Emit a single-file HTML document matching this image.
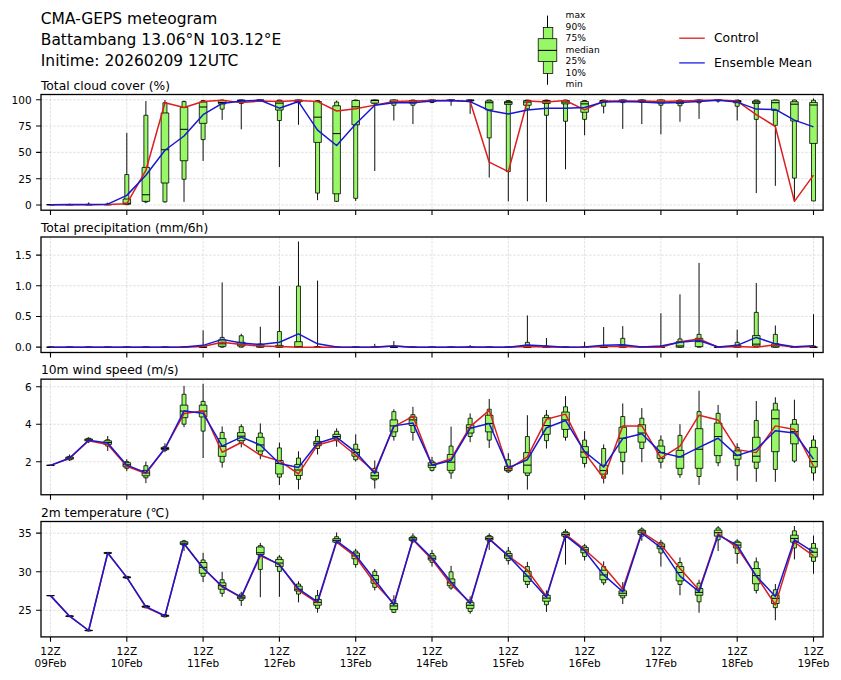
<!DOCTYPE html>
<html lang="en"><head><meta charset="utf-8"><title>CMA-GEPS meteogram</title>
<style>html,body{margin:0;padding:0;background:#fff}svg{display:block}text{font-family:"DejaVu Sans","Liberation Sans",sans-serif;fill:#000}</style></head><body>
<svg width="841" height="680" viewBox="0 0 841 680">
<rect width="841" height="680" fill="#fff"/>
<text x="40.8" y="23.7" font-size="15.46">CMA-GEPS meteogram</text>
<text x="40.8" y="44.9" font-size="15.46">Battambang 13.06°N 103.12°E</text>
<text x="40.8" y="65.5" font-size="15.46">Initime: 20260209 12UTC</text>
<line x1="547.5" y1="15.6" x2="547.5" y2="84.8" stroke="#000" stroke-width="1"/>
<rect x="543.3" y="27.5" width="9.5" height="45.9" fill="#98f766" stroke="#000" stroke-width="0.75"/>
<rect x="538.2" y="38.7" width="18.6" height="22.9" fill="#98f766" stroke="#000" stroke-width="0.75"/>
<line x1="538.2" y1="50.4" x2="556.8" y2="50.4" stroke="#000" stroke-width="1.1"/>
<text x="565.6" y="18.1" font-size="9.1">max</text>
<text x="565.6" y="30.0" font-size="9.1">90%</text>
<text x="565.6" y="41.2" font-size="9.1">75%</text>
<text x="565.6" y="52.9" font-size="9.1">median</text>
<text x="565.6" y="64.1" font-size="9.1">25%</text>
<text x="565.6" y="75.9" font-size="9.1">10%</text>
<text x="565.6" y="87.3" font-size="9.1">min</text>
<line x1="679.2" y1="38.2" x2="704.8" y2="38.2" stroke="#d81e1e" stroke-width="1.3"/>
<line x1="679.2" y1="62.9" x2="704.8" y2="62.9" stroke="#1c1ce0" stroke-width="1.3"/>
<text x="714.0" y="42.1" font-size="12.35">Control</text>
<text x="714.0" y="66.8" font-size="12.35">Ensemble Mean</text>
<g id="panel1">
<text x="40.9" y="89.7" font-size="12.3">Total cloud cover (%)</text>
<clipPath id="c0"><rect x="41.0" y="94.5" width="782.1" height="115.7"/></clipPath>
<path d="M50.50 94.5V210.2M126.80 94.5V210.2M203.10 94.5V210.2M279.40 94.5V210.2M355.70 94.5V210.2M432.00 94.5V210.2M508.30 94.5V210.2M584.60 94.5V210.2M660.90 94.5V210.2M737.20 94.5V210.2M813.50 94.5V210.2M41.0 205.00H823.1M41.0 178.69H823.1M41.0 152.37H823.1M41.0 126.06H823.1M41.0 99.74H823.1" stroke="#b0b0b0" stroke-opacity="0.55" stroke-width="0.65" stroke-dasharray="2.8 1.2" fill="none"/>
<g clip-path="url(#c0)">
<path d="M50.50 204.70V204.70M69.58 204.70V203.65M88.65 204.70V202.40M107.72 204.70V202.61M126.80 204.70V132.88M145.88 203.23V101.05M164.95 202.61V100.00M184.03 201.87V100.52M203.10 160.94V100.00M222.17 119.89V100.00M241.25 129.32V100.00M260.32 101.57V100.00M279.40 167.01V100.00M298.48 124.81V100.00M317.55 200.20V100.00M336.62 201.87V100.52M355.70 200.93V100.00M374.77 170.99V100.00M393.85 120.52V100.00M412.93 124.08V100.00M432.00 103.14V100.00M451.07 105.76V100.00M470.15 113.93V100.00M489.22 177.58V100.00M508.30 201.35V100.00M527.38 201.35V100.00M546.45 201.87V100.00M565.52 169.31V100.00M584.60 135.28V100.00M603.67 113.40V100.00M622.75 128.90V100.00M641.82 124.08V100.00M660.90 134.34V100.00M679.98 121.78V100.00M699.05 118.85V100.00M718.12 102.72V100.00M737.20 120.52V100.00M756.27 193.08V100.00M775.35 185.85V100.00M794.42 201.35V99.69M813.50 201.35V98.43" stroke="#000" stroke-width="0.95" fill="none"/>
<path d="M48.50 204.70H52.50V204.70H48.50ZM67.58 204.49H71.58V204.70H67.58ZM86.65 204.18H90.65V204.70H86.65ZM105.72 203.86H109.72V204.70H105.72ZM124.80 174.55H128.80V204.70H124.80ZM143.88 115.29H147.88V201.87H143.88ZM162.95 102.72H166.95V201.87H162.95ZM182.03 101.57H186.03V179.26H182.03ZM201.10 100.52H205.10V139.58H201.10ZM220.17 100.00H224.17V109.11H220.17ZM239.25 100.00H243.25V103.46H239.25ZM258.32 100.00H262.32V101.05H258.32ZM277.40 100.00H281.40V120.52H277.40ZM296.48 100.00H300.48V102.72H296.48ZM315.55 100.52H319.55V193.08H315.55ZM334.62 102.09H338.62V201.35H334.62ZM353.70 100.00H357.70V198.31H353.70ZM372.77 100.00H376.77V103.87H372.77ZM391.85 100.00H395.85V105.23H391.85ZM410.93 100.00H414.93V105.23H410.93ZM430.00 100.00H434.00V102.51H430.00ZM449.07 100.00H453.07V101.05H449.07ZM468.15 100.00H472.15V101.57H468.15ZM487.22 100.00H491.22V137.90H487.22ZM506.30 100.52H510.30V171.61H506.30ZM525.38 100.00H529.38V108.79H525.38ZM544.45 100.00H548.45V115.29H544.45ZM563.52 100.00H567.52V121.25H563.52ZM582.60 100.52H586.60V119.37H582.60ZM601.67 100.00H605.67V106.18H601.67ZM620.75 100.00H624.75V102.62H620.75ZM639.82 100.00H643.82V102.51H639.82ZM658.90 100.00H662.90V105.23H658.90ZM677.98 100.00H681.98V105.76H677.98ZM697.05 100.00H701.05V102.72H697.05ZM716.12 100.00H720.12V101.05H716.12ZM735.20 100.00H739.20V106.28H735.20ZM754.27 100.00H758.27V119.37H754.27ZM773.35 100.00H777.35V125.34H773.35ZM792.42 100.00H796.42V178.11H792.42ZM811.50 100.31H815.50V200.93H811.50Z" stroke="#000" stroke-width="0.8" fill="#98f766"/>
<path d="M46.70 204.70H54.30V204.70H46.70ZM65.78 204.70H73.38V204.70H65.78ZM84.85 204.60H92.45V204.70H84.85ZM103.92 204.49H111.52V204.70H103.92ZM123.00 199.05H130.60V204.18H123.00ZM142.07 167.43H149.68V201.35H142.07ZM161.15 112.98H168.75V183.03H161.15ZM180.22 107.43H187.83V160.73H180.22ZM199.30 102.09H206.90V123.35H199.30ZM218.37 100.52H225.97V103.87H218.37ZM237.45 100.00H245.05V102.09H237.45ZM256.52 100.00H264.12V100.52H256.52ZM275.60 101.05H283.20V110.05H275.60ZM294.68 100.00H302.28V101.57H294.68ZM313.75 101.57H321.35V142.40H313.75ZM332.82 105.76H340.43V193.81H332.82ZM351.90 100.52H359.50V124.81H351.90ZM370.97 100.00H378.57V103.14H370.97ZM390.05 100.00H397.65V102.72H390.05ZM409.12 100.52H416.73V103.14H409.12ZM428.20 100.00H435.80V101.57H428.20ZM447.27 100.00H454.88V100.52H447.27ZM466.35 100.00H473.95V100.73H466.35ZM485.42 101.05H493.02V109.84H485.42ZM504.50 101.57H512.10V104.40H504.50ZM523.58 100.52H531.17V105.23H523.58ZM542.65 100.52H550.25V103.46H542.65ZM561.73 100.52H569.32V103.87H561.73ZM580.80 101.57H588.40V112.25H580.80ZM599.88 100.52H607.47V102.09H599.88ZM618.95 100.00H626.55V101.57H618.95ZM638.02 100.00H645.62V101.57H638.02ZM657.10 100.00H664.70V102.93H657.10ZM676.18 100.52H683.77V103.46H676.18ZM695.25 100.00H702.85V101.57H695.25ZM714.33 100.00H721.92V100.52H714.33ZM733.40 100.52H741.00V102.72H733.40ZM752.48 101.05H760.07V103.46H752.48ZM771.55 100.21H779.15V110.37H771.55ZM790.62 101.78H798.22V120.94H790.62ZM809.70 102.41H817.30V143.45H809.70Z" stroke="#000" stroke-width="0.8" fill="#98f766"/>
<path d="M46.70 204.70H54.30M65.78 204.70H73.38M84.85 204.70H92.45M103.92 204.70H111.52M123.00 203.23H130.60M142.07 194.75H149.68M161.15 149.73H168.75M180.22 129.32H187.83M199.30 107.01H206.90M218.37 102.51H225.97M237.45 100.52H245.05M256.52 100.21H264.12M275.60 103.14H283.20M294.68 100.52H302.28M313.75 117.17H321.35M332.82 133.61H340.43M351.90 106.81H359.50M370.97 100.52H378.57M390.05 101.57H397.65M409.12 102.09H416.73M428.20 100.52H435.80M447.27 100.21H454.88M466.35 100.31H473.95M485.42 102.72H493.02M504.50 102.72H512.10M523.58 102.09H531.17M542.65 101.57H550.25M561.73 102.09H569.32M580.80 103.87H588.40M599.88 101.05H607.47M618.95 100.73H626.55M638.02 100.52H645.62M657.10 101.57H664.70M676.18 101.57H683.77M695.25 100.52H702.85M714.33 100.21H721.92M733.40 101.57H741.00M752.48 102.09H760.07M771.55 102.72H779.15M790.62 104.19H798.22M809.70 105.03H817.30" stroke="#000" stroke-width="1.0" fill="none"/>
<polyline points="50.50,204.70 69.58,204.70 88.65,204.70 107.72,204.49 126.80,203.65 145.88,170.46 164.95,102.72 184.03,107.43 203.10,101.57 222.17,100.31 241.25,102.62 260.32,101.05 279.40,101.57 298.48,100.52 317.55,101.57 336.62,110.99 355.70,108.69 374.77,105.13 393.85,101.57 412.93,101.05 432.00,100.52 451.07,100.52 470.15,101.57 489.22,162.19 508.30,171.61 527.38,101.05 546.45,102.09 565.52,100.52 584.60,109.84 603.67,101.05 622.75,101.05 641.82,101.05 660.90,101.57 679.98,101.05 699.05,100.52 718.12,100.00 737.20,101.05 756.27,114.66 775.35,126.49 794.42,201.35 813.50,175.17" stroke="#dc1e1e" stroke-width="1.5" fill="none" stroke-linejoin="round"/>
<polyline points="50.50,204.70 69.58,204.60 88.65,204.39 107.72,204.18 126.80,195.38 145.88,175.17 164.95,150.26 184.03,136.02 203.10,114.66 222.17,103.46 241.25,101.05 260.32,100.21 279.40,108.17 298.48,101.57 317.55,130.05 336.62,145.54 355.70,124.08 374.77,105.23 393.85,102.72 412.93,102.72 432.00,101.05 451.07,100.52 470.15,101.57 489.22,110.47 508.30,113.93 527.38,109.95 546.45,108.17 565.52,108.17 584.60,107.43 603.67,102.09 622.75,101.57 641.82,102.09 660.90,102.93 679.98,102.51 699.05,101.57 718.12,100.31 737.20,102.09 756.27,109.11 775.35,109.42 794.42,120.10 813.50,126.91" stroke="#1818d4" stroke-width="1.5" fill="none" stroke-linejoin="round"/>
</g>
<rect x="41.0" y="94.5" width="782.1" height="115.7" fill="none" stroke="#000" stroke-width="1.3"/>
<path d="M50.50 210.2v4.9M126.80 210.2v4.9M203.10 210.2v4.9M279.40 210.2v4.9M355.70 210.2v4.9M432.00 210.2v4.9M508.30 210.2v4.9M584.60 210.2v4.9M660.90 210.2v4.9M737.20 210.2v4.9M813.50 210.2v4.9M41.0 205.00h-4.9M41.0 178.69h-4.9M41.0 152.37h-4.9M41.0 126.06h-4.9M41.0 99.74h-4.9" stroke="#000" stroke-width="1.1" fill="none"/>
<text x="31.6" y="209.0" font-size="10.5" text-anchor="end">0</text>
<text x="31.6" y="182.7" font-size="10.5" text-anchor="end">25</text>
<text x="31.6" y="156.4" font-size="10.5" text-anchor="end">50</text>
<text x="31.6" y="130.1" font-size="10.5" text-anchor="end">75</text>
<text x="31.6" y="103.7" font-size="10.5" text-anchor="end">100</text>
</g>
<g id="panel2">
<text x="40.9" y="232.2" font-size="12.3">Total precipitation (mm/6h)</text>
<clipPath id="c1"><rect x="41.0" y="237.0" width="782.1" height="115.5"/></clipPath>
<path d="M50.50 237.0V352.5M126.80 237.0V352.5M203.10 237.0V352.5M279.40 237.0V352.5M355.70 237.0V352.5M432.00 237.0V352.5M508.30 237.0V352.5M584.60 237.0V352.5M660.90 237.0V352.5M737.20 237.0V352.5M813.50 237.0V352.5M41.0 347.10H823.1M41.0 316.44H823.1M41.0 285.77H823.1M41.0 255.11H823.1" stroke="#b0b0b0" stroke-opacity="0.55" stroke-width="0.65" stroke-dasharray="2.8 1.2" fill="none"/>
<g clip-path="url(#c1)">
<path d="M50.50 347.20V347.20M69.58 347.20V347.20M88.65 347.20V347.20M107.72 347.20V347.20M126.80 347.20V347.20M145.88 347.20V347.20M164.95 347.20V347.20M184.03 347.20V347.20M203.10 347.20V330.34M222.17 347.20V282.43M241.25 347.20V333.76M260.32 347.20V326.73M279.40 347.20V286.10M298.48 347.20V241.50M317.55 347.20V280.60M336.62 347.20V347.20M355.70 347.20V347.20M374.77 347.20V343.84M393.85 347.20V341.09M412.93 347.20V347.20M432.00 347.20V347.20M451.07 347.20V347.20M470.15 347.20V345.06M489.22 347.20V347.20M508.30 347.20V347.20M527.38 347.20V315.43M546.45 347.20V338.03M565.52 347.20V347.20M584.60 347.20V341.70M603.67 347.20V327.04M622.75 347.20V326.12M641.82 347.20V347.20M660.90 347.20V313.29M679.98 347.20V294.35M699.05 347.20V262.88M718.12 347.20V347.20M737.20 347.20V329.66M756.27 347.20V283.04M775.35 347.20V325.51M794.42 347.20V347.20M813.50 347.20V314.21" stroke="#000" stroke-width="0.95" fill="none"/>
<path d="M48.50 347.20H52.50V347.20H48.50ZM67.58 347.20H71.58V347.20H67.58ZM86.65 347.20H90.65V347.20H86.65ZM105.72 347.20H109.72V347.20H105.72ZM124.80 347.20H128.80V347.20H124.80ZM143.88 347.20H147.88V347.20H143.88ZM162.95 347.20H166.95V347.20H162.95ZM182.03 347.20H186.03V347.20H182.03ZM201.10 346.59H205.10V347.20H201.10ZM220.17 337.42H224.17V347.20H220.17ZM239.25 335.77H243.25V347.20H239.25ZM258.32 343.84H262.32V347.20H258.32ZM277.40 331.50H281.40V347.20H277.40ZM296.48 286.10H300.48V347.20H296.48ZM315.55 346.59H319.55V347.20H315.55ZM334.62 347.20H338.62V347.20H334.62ZM353.70 347.20H357.70V347.20H353.70ZM372.77 347.20H376.77V347.20H372.77ZM391.85 345.98H395.85V347.20H391.85ZM410.93 347.20H414.93V347.20H410.93ZM430.00 347.20H434.00V347.20H430.00ZM449.07 347.20H453.07V347.20H449.07ZM468.15 347.20H472.15V347.20H468.15ZM487.22 347.20H491.22V347.20H487.22ZM506.30 347.20H510.30V347.20H506.30ZM525.38 342.31H529.38V347.20H525.38ZM544.45 345.98H548.45V347.20H544.45ZM563.52 347.20H567.52V347.20H563.52ZM582.60 347.20H586.60V347.20H582.60ZM601.67 345.67H605.67V347.20H601.67ZM620.75 338.34H624.75V347.20H620.75ZM639.82 347.20H643.82V347.20H639.82ZM658.90 346.28H662.90V347.20H658.90ZM677.98 338.95H681.98V347.20H677.98ZM697.05 334.37H701.05V347.20H697.05ZM716.12 347.20H720.12V347.20H716.12ZM735.20 342.31H739.20V347.20H735.20ZM754.27 312.37H758.27V347.20H754.27ZM773.35 334.37H777.35V347.20H773.35ZM792.42 347.20H796.42V347.20H792.42ZM811.50 345.98H815.50V347.20H811.50Z" stroke="#000" stroke-width="0.8" fill="#98f766"/>
<path d="M46.70 347.20H54.30V347.20H46.70ZM65.78 347.20H73.38V347.20H65.78ZM84.85 347.20H92.45V347.20H84.85ZM103.92 347.20H111.52V347.20H103.92ZM123.00 347.20H130.60V347.20H123.00ZM142.07 347.20H149.68V347.20H142.07ZM161.15 347.20H168.75V347.20H161.15ZM180.22 347.20H187.83V347.20H180.22ZM199.30 347.20H206.90V347.20H199.30ZM218.37 339.87H225.97V346.28H218.37ZM237.45 342.31H245.05V345.98H237.45ZM256.52 344.76H264.12V347.20H256.52ZM275.60 345.37H283.20V347.20H275.60ZM294.68 341.70H302.28V347.20H294.68ZM313.75 347.20H321.35V347.20H313.75ZM332.82 347.20H340.43V347.20H332.82ZM351.90 347.20H359.50V347.20H351.90ZM370.97 347.20H378.57V347.20H370.97ZM390.05 347.20H397.65V347.20H390.05ZM409.12 347.20H416.73V347.20H409.12ZM428.20 347.20H435.80V347.20H428.20ZM447.27 347.20H454.88V347.20H447.27ZM466.35 347.20H473.95V347.20H466.35ZM485.42 347.20H493.02V347.20H485.42ZM504.50 347.20H512.10V347.20H504.50ZM523.58 346.28H531.17V347.20H523.58ZM542.65 347.20H550.25V347.20H542.65ZM561.73 347.20H569.32V347.20H561.73ZM580.80 347.20H588.40V347.20H580.80ZM599.88 346.59H607.47V347.20H599.88ZM618.95 345.37H626.55V347.20H618.95ZM638.02 347.20H645.62V347.20H638.02ZM657.10 347.20H664.70V347.20H657.10ZM676.18 341.70H683.77V347.20H676.18ZM695.25 338.34H702.85V346.59H695.25ZM714.33 347.20H721.92V347.20H714.33ZM733.40 345.37H741.00V347.20H733.40ZM752.48 335.59H760.07V345.98H752.48ZM771.55 343.84H779.15V347.20H771.55ZM790.62 347.20H798.22V347.20H790.62ZM809.70 347.20H817.30V347.20H809.70Z" stroke="#000" stroke-width="0.8" fill="#98f766"/>
<path d="M46.70 347.20H54.30M65.78 347.20H73.38M84.85 347.20H92.45M103.92 347.20H111.52M123.00 347.20H130.60M142.07 347.20H149.68M161.15 347.20H168.75M180.22 347.20H187.83M199.30 347.20H206.90M218.37 343.84H225.97M237.45 344.76H245.05M256.52 346.28H264.12M275.60 346.59H283.20M294.68 346.59H302.28M313.75 347.20H321.35M332.82 347.20H340.43M351.90 347.20H359.50M370.97 347.20H378.57M390.05 347.20H397.65M409.12 347.20H416.73M428.20 347.20H435.80M447.27 347.20H454.88M466.35 347.20H473.95M485.42 347.20H493.02M504.50 347.20H512.10M523.58 347.20H531.17M542.65 347.20H550.25M561.73 347.20H569.32M580.80 347.20H588.40M599.88 347.20H607.47M618.95 346.59H626.55M638.02 347.20H645.62M657.10 347.20H664.70M676.18 345.98H683.77M695.25 341.70H702.85M714.33 347.20H721.92M733.40 346.59H741.00M752.48 344.14H760.07M771.55 345.98H779.15M790.62 347.20H798.22M809.70 347.20H817.30" stroke="#000" stroke-width="1.0" fill="none"/>
<polyline points="50.50,347.20 69.58,347.20 88.65,347.20 107.72,347.20 126.80,347.20 145.88,347.20 164.95,347.20 184.03,347.20 203.10,346.59 222.17,342.31 241.25,344.57 260.32,345.98 279.40,346.59 298.48,347.20 317.55,347.20 336.62,347.20 355.70,347.20 374.77,347.20 393.85,345.98 412.93,347.20 432.00,347.20 451.07,347.20 470.15,347.20 489.22,347.20 508.30,347.20 527.38,346.59 546.45,346.89 565.52,347.20 584.60,347.20 603.67,346.59 622.75,346.59 641.82,347.20 660.90,347.20 679.98,341.70 699.05,338.95 718.12,347.20 737.20,346.59 756.27,347.20 775.35,344.76 794.42,347.20 813.50,346.59" stroke="#dc1e1e" stroke-width="1.5" fill="none" stroke-linejoin="round"/>
<polyline points="50.50,347.20 69.58,347.20 88.65,347.20 107.72,347.20 126.80,347.20 145.88,347.20 164.95,347.20 184.03,347.02 203.10,345.37 222.17,339.38 241.25,342.92 260.32,344.57 279.40,342.31 298.48,333.88 317.55,343.84 336.62,347.02 355.70,347.20 374.77,347.02 393.85,345.98 412.93,347.20 432.00,347.20 451.07,347.20 470.15,347.08 489.22,347.20 508.30,347.20 527.38,345.06 546.45,345.98 565.52,347.20 584.60,346.89 603.67,345.37 622.75,344.76 641.82,346.96 660.90,345.98 679.98,342.31 699.05,340.48 718.12,346.96 737.20,345.37 756.27,337.42 775.35,343.84 794.42,346.71 813.50,345.67" stroke="#1818d4" stroke-width="1.5" fill="none" stroke-linejoin="round"/>
</g>
<rect x="41.0" y="237.0" width="782.1" height="115.5" fill="none" stroke="#000" stroke-width="1.3"/>
<path d="M50.50 352.5v4.9M126.80 352.5v4.9M203.10 352.5v4.9M279.40 352.5v4.9M355.70 352.5v4.9M432.00 352.5v4.9M508.30 352.5v4.9M584.60 352.5v4.9M660.90 352.5v4.9M737.20 352.5v4.9M813.50 352.5v4.9M41.0 347.10h-4.9M41.0 316.44h-4.9M41.0 285.77h-4.9M41.0 255.11h-4.9" stroke="#000" stroke-width="1.1" fill="none"/>
<text x="31.6" y="351.1" font-size="10.5" text-anchor="end">0.0</text>
<text x="31.6" y="320.4" font-size="10.5" text-anchor="end">0.5</text>
<text x="31.6" y="289.8" font-size="10.5" text-anchor="end">1.0</text>
<text x="31.6" y="259.1" font-size="10.5" text-anchor="end">1.5</text>
</g>
<g id="panel3">
<text x="40.9" y="374.3" font-size="12.3">10m wind speed (m/s)</text>
<clipPath id="c2"><rect x="41.0" y="379.15" width="782.1" height="115.6"/></clipPath>
<path d="M50.50 379.15V494.75M126.80 379.15V494.75M203.10 379.15V494.75M279.40 379.15V494.75M355.70 379.15V494.75M432.00 379.15V494.75M508.30 379.15V494.75M584.60 379.15V494.75M660.90 379.15V494.75M737.20 379.15V494.75M813.50 379.15V494.75M41.0 461.79H823.1M41.0 424.28H823.1M41.0 386.77H823.1" stroke="#b0b0b0" stroke-opacity="0.55" stroke-width="0.65" stroke-dasharray="2.8 1.2" fill="none"/>
<g clip-path="url(#c2)">
<path d="M50.50 465.34V465.34M69.58 460.85V454.49M88.65 443.09V437.29M107.72 450.94V435.98M126.80 471.14V459.17M145.88 483.11V461.60M164.95 452.25V443.27M184.03 427.19V385.87M203.10 458.05V383.81M222.17 467.58V426.44M241.25 447.39V424.20M260.32 459.17V423.45M279.40 484.98V442.53M298.48 489.46V451.32M317.55 454.49V429.44M336.62 446.64V428.31M355.70 461.60V434.30M374.77 488.53V460.48M393.85 440.66V409.24M412.93 440.66V406.81M432.00 471.51V456.93M451.07 478.80V426.63M470.15 442.15V413.35M489.22 447.95V398.96M508.30 473.01V453.19M527.38 489.65V415.22M546.45 448.51V409.99M565.52 440.66V396.15M584.60 467.58V431.12M603.67 483.48V444.40M622.75 474.50V403.44M641.82 462.16V408.12M660.90 468.33V435.42M679.98 477.87V424.20M699.05 484.98V390.73M718.12 466.28V404.94M737.20 480.67V443.27M756.27 481.80V401.01M775.35 481.80V397.27M794.42 462.72V399.70M813.50 480.67V435.42" stroke="#000" stroke-width="0.95" fill="none"/>
<path d="M48.50 465.34H52.50V465.34H48.50ZM67.58 456.36H71.58V459.92H67.58ZM86.65 438.23H90.65V441.59H86.65ZM105.72 439.72H109.72V446.08H105.72ZM124.80 461.60H128.80V468.33H124.80ZM143.88 465.71H147.88V477.87H143.88ZM162.95 446.64H166.95V450.38H162.95ZM182.03 394.28H186.03V424.20H182.03ZM201.10 401.39H205.10V431.12H201.10ZM220.17 432.43H224.17V462.16H220.17ZM239.25 426.63H243.25V443.27H239.25ZM258.32 432.99H262.32V454.49H258.32ZM277.40 447.95H281.40V477.12H277.40ZM296.48 458.05H300.48V479.37H296.48ZM315.55 436.54H319.55V448.51H315.55ZM334.62 431.31H338.62V440.66H334.62ZM353.70 444.21H357.70V459.73H353.70ZM372.77 468.33H376.77V479.93H372.77ZM391.85 411.67H395.85V436.54H391.85ZM410.93 414.66H414.93V432.43H410.93ZM430.00 461.04H434.00V470.39H430.00ZM449.07 446.08H453.07V473.01H449.07ZM468.15 418.22H472.15V436.54H468.15ZM487.22 409.24H491.22V440.10H487.22ZM506.30 459.73H510.30V471.89H506.30ZM525.38 436.54H529.38V475.44H525.38ZM544.45 415.22H548.45V440.66H544.45ZM563.52 406.81H567.52V437.29H563.52ZM582.60 440.10H586.60V463.47H582.60ZM601.67 448.51H605.67V478.24H601.67ZM620.75 416.53H624.75V461.60H620.75ZM639.82 418.22H643.82V448.51H639.82ZM658.90 440.10H662.90V462.16H658.90ZM677.98 435.42H681.98V474.69H677.98ZM697.05 411.67H701.05V476.56H697.05ZM716.12 413.35H720.12V462.72H716.12ZM735.20 447.39H739.20V465.71H735.20ZM754.27 420.46H758.27V468.33H754.27ZM773.35 403.26H777.35V469.45H773.35ZM792.42 419.53H796.42V461.04H792.42ZM811.50 440.10H815.50V473.01H811.50Z" stroke="#000" stroke-width="0.8" fill="#98f766"/>
<path d="M46.70 465.34H54.30V465.34H46.70ZM65.78 457.11H73.38V459.17H65.78ZM84.85 438.97H92.45V440.84H84.85ZM103.92 440.84H111.52V444.40H103.92ZM123.00 462.72H130.60V466.84H123.00ZM142.07 470.39H149.68V475.81H142.07ZM161.15 447.39H168.75V449.63H161.15ZM180.22 405.13H187.83V417.66H180.22ZM199.30 405.13H206.90V416.91H199.30ZM218.37 438.60H225.97V456.36H218.37ZM237.45 432.62H245.05V440.66H237.45ZM256.52 437.29H264.12V450.94H256.52ZM275.60 460.48H283.20V473.94H275.60ZM294.68 464.41H302.28V475.44H294.68ZM313.75 441.40H321.35V445.71H313.75ZM332.82 434.30H340.43V438.97H332.82ZM351.90 449.26H359.50V456.18H351.90ZM370.97 472.26H378.57V478.80H370.97ZM390.05 419.90H397.65V431.87H390.05ZM409.12 417.09H416.73V425.51H409.12ZM428.20 462.72H435.80V467.58H428.20ZM447.27 454.49H454.88V470.39H447.27ZM466.35 424.76H473.95V432.99H466.35ZM485.42 415.22H493.02V431.87H485.42ZM504.50 466.28H512.10V470.58H504.50ZM523.58 452.62H531.17V473.01H523.58ZM542.65 417.66H550.25V434.30H542.65ZM561.73 412.05H569.32V429.44H561.73ZM580.80 446.64H588.40V457.30H580.80ZM599.88 465.15H607.47V474.13H599.88ZM618.95 427.19H626.55V452.25H618.95ZM638.02 424.76H645.62V442.15H638.02ZM657.10 446.08H664.70V458.42H657.10ZM676.18 450.38H683.77V468.33H676.18ZM695.25 428.69H702.85V468.33H695.25ZM714.33 423.08H721.92V455.62H714.33ZM733.40 450.94H741.00V459.17H733.40ZM752.48 437.29H760.07V462.16H752.48ZM771.55 409.99H779.15V451.69H771.55ZM790.62 424.20H798.22V443.84H790.62ZM809.70 447.39H817.30V467.02H809.70Z" stroke="#000" stroke-width="0.8" fill="#98f766"/>
<path d="M46.70 465.34H54.30M65.78 458.05H73.38M84.85 439.91H92.45M103.92 442.53H111.52M123.00 464.78H130.60M142.07 473.01H149.68M161.15 448.51H168.75M180.22 411.11H187.83M199.30 411.11H206.90M218.37 446.27H225.97M237.45 436.17H245.05M256.52 444.96H264.12M275.60 463.47H283.20M294.68 470.02H302.28M313.75 443.27H321.35M332.82 436.54H340.43M351.90 452.62H359.50M370.97 475.81H378.57M390.05 425.88H397.65M409.12 419.90H416.73M428.20 465.15H435.80M447.27 462.16H454.88M466.35 427.75H473.95M485.42 423.45H493.02M504.50 468.71H512.10M523.58 465.15H531.17M542.65 425.51H550.25M561.73 419.90H569.32M580.80 452.06H588.40M599.88 470.58H607.47M618.95 438.23H626.55M638.02 432.99H645.62M657.10 452.62H664.70M676.18 456.93H683.77M695.25 449.26H702.85M714.33 436.54H721.92M733.40 455.24H741.00M752.48 456.18H760.07M771.55 418.78H779.15M790.62 431.68H798.22M809.70 461.60H817.30" stroke="#000" stroke-width="1.0" fill="none"/>
<polyline points="50.50,465.34 69.58,458.42 88.65,440.66 107.72,444.40 126.80,466.28 145.88,473.57 164.95,448.51 184.03,413.54 203.10,410.92 222.17,452.25 241.25,442.53 260.32,455.24 279.40,460.85 298.48,473.94 317.55,444.96 336.62,439.72 355.70,455.24 374.77,471.89 393.85,426.63 412.93,416.35 432.00,465.15 451.07,458.80 470.15,426.63 489.22,410.36 508.30,469.45 527.38,456.93 546.45,419.34 565.52,414.10 584.60,452.62 603.67,478.24 622.75,426.07 641.82,425.88 660.90,458.05 679.98,446.08 699.05,415.22 718.12,419.90 737.20,449.63 756.27,452.62 775.35,425.88 794.42,429.44 813.50,466.28" stroke="#dc1e1e" stroke-width="1.5" fill="none" stroke-linejoin="round"/>
<polyline points="50.50,465.34 69.58,458.05 88.65,440.19 107.72,443.09 126.80,465.15 145.88,472.63 164.95,448.51 184.03,410.92 203.10,413.35 222.17,446.08 241.25,437.10 260.32,444.96 279.40,463.47 298.48,467.58 317.55,443.27 336.62,437.29 355.70,452.06 374.77,473.57 393.85,425.88 412.93,423.08 432.00,465.15 451.07,460.48 470.15,428.31 489.22,423.45 508.30,467.58 527.38,459.73 546.45,427.75 565.52,420.46 584.60,451.69 603.67,467.02 622.75,438.60 641.82,433.74 660.90,452.62 679.98,456.93 699.05,447.39 718.12,438.23 737.20,455.62 756.27,449.26 775.35,430.75 794.42,432.99 813.50,459.17" stroke="#1818d4" stroke-width="1.5" fill="none" stroke-linejoin="round"/>
</g>
<rect x="41.0" y="379.15" width="782.1" height="115.6" fill="none" stroke="#000" stroke-width="1.3"/>
<path d="M50.50 494.75v4.9M126.80 494.75v4.9M203.10 494.75v4.9M279.40 494.75v4.9M355.70 494.75v4.9M432.00 494.75v4.9M508.30 494.75v4.9M584.60 494.75v4.9M660.90 494.75v4.9M737.20 494.75v4.9M813.50 494.75v4.9M41.0 461.79h-4.9M41.0 424.28h-4.9M41.0 386.77h-4.9" stroke="#000" stroke-width="1.1" fill="none"/>
<text x="31.6" y="465.8" font-size="10.5" text-anchor="end">2</text>
<text x="31.6" y="428.3" font-size="10.5" text-anchor="end">4</text>
<text x="31.6" y="390.8" font-size="10.5" text-anchor="end">6</text>
</g>
<g id="panel4">
<text x="40.9" y="516.7" font-size="12.3">2m temperature (℃)</text>
<clipPath id="c3"><rect x="41.0" y="521.5" width="782.1" height="115.4"/></clipPath>
<path d="M50.50 521.5V636.9M126.80 521.5V636.9M203.10 521.5V636.9M279.40 521.5V636.9M355.70 521.5V636.9M432.00 521.5V636.9M508.30 521.5V636.9M584.60 521.5V636.9M660.90 521.5V636.9M737.20 521.5V636.9M813.50 521.5V636.9M41.0 610.26H823.1M41.0 571.69H823.1M41.0 533.12H823.1" stroke="#b0b0b0" stroke-opacity="0.55" stroke-width="0.65" stroke-dasharray="2.8 1.2" fill="none"/>
<g clip-path="url(#c3)">
<path d="M50.50 595.62V595.62M69.58 616.86V615.47M88.65 631.20V629.80M107.72 553.93V552.07M126.80 578.73V575.94M145.88 608.26V605.00M164.95 617.40V614.15M184.03 551.06V539.83M203.10 582.06V552.77M222.17 596.87V571.83M241.25 605.93V591.75M260.32 597.18V542.92M279.40 596.87V555.17M298.48 602.37V581.37M317.55 612.68V589.97M336.62 543.93V532.46M355.70 567.73V548.74M374.77 590.43V568.97M393.85 613.06V595.24M412.93 542.77V533.24M432.00 566.56V549.90M451.07 589.74V565.87M470.15 613.84V596.40M489.22 549.90V533.24M508.30 564.62V547.03M527.38 588.03V561.84M546.45 611.90V590.43M565.52 564.62V528.98M584.60 560.60V543.93M603.67 585.16V561.37M622.75 604.00V582.06M641.82 540.83V527.27M660.90 566.56V539.83M679.98 595.24V557.50M699.05 612.68V579.74M718.12 551.06V526.03M737.20 563.70V539.21M756.27 593.53V557.50M775.35 620.27V584.00M794.42 559.43V526.03M813.50 573.77V535.56" stroke="#000" stroke-width="0.95" fill="none"/>
<path d="M48.50 595.62H52.50V595.62H48.50ZM67.58 615.70H71.58V616.63H67.58ZM86.65 630.04H90.65V630.97H86.65ZM105.72 552.38H109.72V553.62H105.72ZM124.80 576.40H128.80V578.26H124.80ZM143.88 605.55H147.88V607.72H143.88ZM162.95 614.69H166.95V616.86H162.95ZM182.03 540.83H186.03V545.64H182.03ZM201.10 559.98H205.10V576.25H201.10ZM220.17 579.74H224.17V593.30H220.17ZM239.25 594.08H243.25V600.43H239.25ZM258.32 545.64H262.32V569.43H258.32ZM277.40 557.03H281.40V571.37H277.40ZM296.48 584.00H300.48V594.08H296.48ZM315.55 595.62H319.55V608.34H315.55ZM334.62 536.73H338.62V542.77H334.62ZM353.70 551.06H357.70V564.62H353.70ZM372.77 571.37H376.77V587.33H372.77ZM391.85 599.97H395.85V612.37H391.85ZM410.93 536.11H414.93V541.76H410.93ZM430.00 553.47H434.00V562.30H430.00ZM449.07 571.83H453.07V588.03H449.07ZM468.15 599.97H472.15V611.44H468.15ZM487.22 535.56H491.22V541.53H487.22ZM506.30 551.06H510.30V560.60H506.30ZM525.38 566.56H529.38V584.47H525.38ZM544.45 594.08H548.45V604.77H544.45ZM563.52 531.30H567.52V537.50H563.52ZM582.60 545.87H586.60V556.57H582.60ZM601.67 566.56H605.67V582.84H601.67ZM620.75 588.73H624.75V597.87H620.75ZM639.82 528.98H643.82V536.11H639.82ZM658.90 542.31H662.90V553.00H658.90ZM677.98 562.53H681.98V584.47H677.98ZM697.05 583.23H701.05V601.83H697.05ZM716.12 527.97H720.12V539.83H716.12ZM735.20 541.07H739.20V553.47H735.20ZM754.27 561.84H758.27V590.43H754.27ZM773.35 589.74H777.35V607.64H773.35ZM792.42 530.84H796.42V547.96H792.42ZM811.50 543.47H815.50V561.37H811.50Z" stroke="#000" stroke-width="0.8" fill="#98f766"/>
<path d="M46.70 595.62H54.30V595.62H46.70ZM65.78 615.93H73.38V616.39H65.78ZM84.85 630.27H92.45V630.73H84.85ZM103.92 552.69H111.52V553.31H103.92ZM123.00 576.87H130.60V577.80H123.00ZM142.07 606.09H149.68V607.17H142.07ZM161.15 615.23H168.75V616.32H161.15ZM180.22 541.76H187.83V544.48H180.22ZM199.30 562.53H206.90V573.31H199.30ZM218.37 582.84H225.97V589.27H218.37ZM237.45 595.62H245.05V598.73H237.45ZM256.52 547.03H264.12V554.55H256.52ZM275.60 559.43H283.20V566.56H275.60ZM294.68 586.17H302.28V590.98H294.68ZM313.75 599.50H321.35V605.24H313.75ZM332.82 538.66H340.43V542.15H332.82ZM351.90 553.00H359.50V558.74H351.90ZM370.97 575.48H378.57V583.23H370.97ZM390.05 603.53H397.65V609.58H390.05ZM409.12 537.50H416.73V540.37H409.12ZM428.20 555.87H435.80V559.98H428.20ZM447.27 578.96H454.88V585.71H447.27ZM466.35 602.37H473.95V608.34H466.35ZM485.42 536.73H493.02V539.83H485.42ZM504.50 553.47H512.10V558.27H504.50ZM523.58 571.37H531.17V581.37H523.58ZM542.65 595.24H550.25V601.21H542.65ZM561.73 532.70H569.32V536.11H561.73ZM580.80 547.58H588.40V552.77H580.80ZM599.88 570.21H607.47V579.74H599.88ZM618.95 590.90H626.55V595.70H618.95ZM638.02 530.37H645.62V534.40H638.02ZM657.10 543.93H664.70V548.74H657.10ZM676.18 566.56H683.77V580.90H676.18ZM695.25 588.50H702.85V595.24H695.25ZM714.33 530.14H721.92V536.11H714.33ZM733.40 542.31H741.00V547.96H733.40ZM752.48 568.50H760.07V583.77H752.48ZM771.55 595.24H779.15V603.53H771.55ZM790.62 535.17H798.22V542.15H790.62ZM809.70 548.20H817.30V557.03H809.70Z" stroke="#000" stroke-width="0.8" fill="#98f766"/>
<path d="M46.70 595.62H54.30M65.78 616.16H73.38M84.85 630.50H92.45M103.92 553.00H111.52M123.00 577.34H130.60M142.07 606.63H149.68M161.15 615.77H168.75M180.22 543.24H187.83M199.30 567.34H206.90M218.37 585.71H225.97M237.45 597.18H245.05M256.52 552.77H264.12M275.60 563.08H283.20M294.68 589.27H302.28M313.75 602.37H321.35M332.82 540.37H340.43M351.90 555.87H359.50M370.97 579.74H378.57M390.05 605.93H397.65M409.12 539.05H416.73M428.20 558.27H435.80M447.27 582.84H454.88M466.35 605.24H473.95M485.42 538.43H493.02M504.50 555.87H512.10M523.58 576.10H531.17M542.65 598.11H550.25M561.73 534.40H569.32M580.80 549.90H588.40M599.88 574.93H607.47M618.95 593.22H626.55M638.02 532.08H645.62M657.10 546.34H664.70M676.18 572.53H683.77M695.25 592.37H702.85M714.33 532.70H721.92M733.40 545.10H741.00M752.48 575.63H760.07M771.55 598.34H779.15M790.62 538.43H798.22M809.70 552.23H817.30" stroke="#000" stroke-width="1.0" fill="none"/>
<polyline points="50.50,595.62 69.58,616.16 88.65,630.50 107.72,553.00 126.80,577.34 145.88,607.40 164.95,616.16 184.03,543.93 203.10,567.73 222.17,586.87 241.25,597.56 260.32,555.87 279.40,564.24 298.48,590.43 317.55,602.83 336.62,542.15 355.70,557.03 374.77,583.23 393.85,603.53 412.93,539.83 432.00,559.43 451.07,584.47 470.15,602.37 489.22,538.43 508.30,555.87 527.38,570.21 546.45,596.40 565.52,534.40 584.60,549.44 603.67,566.56 622.75,589.04 641.82,532.08 660.90,544.63 679.98,568.50 699.05,589.97 718.12,533.62 737.20,547.58 756.27,576.10 775.35,604.77 794.42,542.15 813.50,555.87" stroke="#dc1e1e" stroke-width="1.5" fill="none" stroke-linejoin="round"/>
<polyline points="50.50,595.62 69.58,616.16 88.65,630.50 107.72,553.00 126.80,577.34 145.88,606.63 164.95,615.77 184.03,543.47 203.10,568.27 222.17,586.33 241.25,597.18 260.32,554.55 279.40,564.94 298.48,588.81 317.55,601.83 336.62,540.83 355.70,555.17 374.77,579.74 393.85,604.77 412.93,539.05 432.00,558.27 451.07,582.06 470.15,603.53 489.22,539.21 508.30,555.87 527.38,576.10 546.45,597.18 565.52,535.56 584.60,550.67 603.67,574.93 622.75,591.75 641.82,533.24 660.90,547.58 679.98,576.10 699.05,591.60 718.12,535.17 737.20,545.10 756.27,576.10 775.35,596.40 794.42,539.83 813.50,552.23" stroke="#1818d4" stroke-width="1.5" fill="none" stroke-linejoin="round"/>
</g>
<rect x="41.0" y="521.5" width="782.1" height="115.4" fill="none" stroke="#000" stroke-width="1.3"/>
<path d="M50.50 636.9v4.9M126.80 636.9v4.9M203.10 636.9v4.9M279.40 636.9v4.9M355.70 636.9v4.9M432.00 636.9v4.9M508.30 636.9v4.9M584.60 636.9v4.9M660.90 636.9v4.9M737.20 636.9v4.9M813.50 636.9v4.9M41.0 610.26h-4.9M41.0 571.69h-4.9M41.0 533.12h-4.9" stroke="#000" stroke-width="1.1" fill="none"/>
<text x="31.6" y="614.3" font-size="10.5" text-anchor="end">25</text>
<text x="31.6" y="575.7" font-size="10.5" text-anchor="end">30</text>
<text x="31.6" y="537.1" font-size="10.5" text-anchor="end">35</text>
</g>
<text x="50.5" y="654.5" font-size="10.5" text-anchor="middle">12Z</text>
<text x="50.5" y="666.9" font-size="10.5" text-anchor="middle">09Feb</text>
<text x="126.8" y="654.5" font-size="10.5" text-anchor="middle">12Z</text>
<text x="126.8" y="666.9" font-size="10.5" text-anchor="middle">10Feb</text>
<text x="203.1" y="654.5" font-size="10.5" text-anchor="middle">12Z</text>
<text x="203.1" y="666.9" font-size="10.5" text-anchor="middle">11Feb</text>
<text x="279.4" y="654.5" font-size="10.5" text-anchor="middle">12Z</text>
<text x="279.4" y="666.9" font-size="10.5" text-anchor="middle">12Feb</text>
<text x="355.7" y="654.5" font-size="10.5" text-anchor="middle">12Z</text>
<text x="355.7" y="666.9" font-size="10.5" text-anchor="middle">13Feb</text>
<text x="432.0" y="654.5" font-size="10.5" text-anchor="middle">12Z</text>
<text x="432.0" y="666.9" font-size="10.5" text-anchor="middle">14Feb</text>
<text x="508.3" y="654.5" font-size="10.5" text-anchor="middle">12Z</text>
<text x="508.3" y="666.9" font-size="10.5" text-anchor="middle">15Feb</text>
<text x="584.6" y="654.5" font-size="10.5" text-anchor="middle">12Z</text>
<text x="584.6" y="666.9" font-size="10.5" text-anchor="middle">16Feb</text>
<text x="660.9" y="654.5" font-size="10.5" text-anchor="middle">12Z</text>
<text x="660.9" y="666.9" font-size="10.5" text-anchor="middle">17Feb</text>
<text x="737.2" y="654.5" font-size="10.5" text-anchor="middle">12Z</text>
<text x="737.2" y="666.9" font-size="10.5" text-anchor="middle">18Feb</text>
<text x="813.5" y="654.5" font-size="10.5" text-anchor="middle">12Z</text>
<text x="813.5" y="666.9" font-size="10.5" text-anchor="middle">19Feb</text>
</svg></body></html>
